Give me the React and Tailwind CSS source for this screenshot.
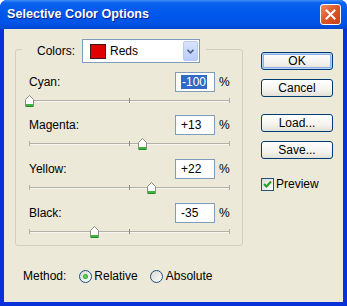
import React from "react";

function Thumb({ left }) {
  return (
    <svg
      width="9"
      height="12"
      viewBox="0 0 9 12"
      className={`absolute top-[3px] ${left}`}
    >
      <path d="M0.5 4.5 L4.5 0.5 L8.5 4.5 L8.5 11.5 L0.5 11.5 Z" fill="#FFFFFF" stroke="#8A8A80" />
      <rect x="1" y="9" width="7" height="2" fill="#3FB33F" />
      <line x1="1" y1="11.5" x2="8" y2="11.5" stroke="#1F8F1F" />
    </svg>
  );
}

function SliderRow({ label, value, selected, thumbLeft, sliderH }) {
  return (
    <div className="flex flex-col">
      <div className="flex h-[20px] items-center">
        <span className="flex-1 text-[12px] text-black">{label}</span>
        <div className="flex h-[20px] w-[40px] items-center border border-[#7F9DB9] bg-white pl-[5px] text-[12px] text-black">
          {selected ? (
            <span className="bg-[#316AC5] px-[1px] leading-[14px] text-white">{value}</span>
          ) : (
            <span>{value}</span>
          )}
        </div>
        <span className="w-[15px] pl-[4px] text-[12px] text-black">%</span>
      </div>
      <div className={`relative ${sliderH}`}>
        <div className="absolute left-0 right-0 top-[8px] h-[2px] border-t border-[#B1B0A6] bg-[#F7F6F1]" />
        <div className="absolute left-0 top-[6px] h-[5px] w-[1px] bg-[#B1B0A6]" />
        <div className="absolute left-[100px] top-[6px] h-[5px] w-[1px] bg-[#8E8D84]" />
        <div className="absolute right-0 top-[6px] h-[5px] w-[1px] bg-[#B1B0A6]" />
        <Thumb left={thumbLeft} />
      </div>
    </div>
  );
}

function XpButton({ children, isDefault, className }) {
  return (
    <div
      className={`flex h-[18px] w-[72px] items-center justify-center rounded-[3px] border border-[#003C74] bg-[linear-gradient(to_bottom,#FFFFFF,#F4F3EE_60%,#E3E1D6)] text-[12px] leading-none text-black ${
        isDefault ? "shadow-[inset_0_0_0_1px_#B8D2F5,inset_0_0_0_2px_#8FB0EC]" : ""
      } ${className || ""}`}
    >
      {children}
    </div>
  );
}

function Radio({ checked }) {
  return (
    <div className="flex h-[13px] w-[13px] items-center justify-center rounded-full border border-[#1C5180] bg-[linear-gradient(135deg,#D8D7CF,#FFFFFF)]">
      {checked && (
        <div className="h-[5px] w-[5px] rounded-full bg-[radial-gradient(circle,#5EDB5E,#1E9E1E)]" />
      )}
    </div>
  );
}

export default function App() {
  return (
    <div className="flex h-[306px] w-[347px] flex-col overflow-hidden rounded-t-[7px] bg-[#0831D9] font-['Liberation_Sans',Arial,sans-serif]">
      {/* Title bar */}
      <div className="flex h-[29px] items-center justify-between bg-[linear-gradient(to_bottom,#3D8DF9_0%,#0A62EE_10%,#0058EC_45%,#0054E6_80%,#0046D2_100%)] pl-[7px] pr-[6px]">
        <span className="text-[12.6px] font-bold text-white [text-shadow:1px_1px_0_#0A1E8C]">
          Selective Color Options
        </span>
        <div className="flex h-[21px] w-[21px] items-center justify-center rounded-[3px] border border-white bg-[linear-gradient(135deg,#EE8A62,#DB5526_50%,#C4401A)]">
          <svg width="11" height="11" viewBox="0 0 11 11">
            <path d="M1.5 1.5 L9.5 9.5 M9.5 1.5 L1.5 9.5" stroke="#FFFFFF" strokeWidth="2" strokeLinecap="square" />
          </svg>
        </div>
      </div>

      {/* Body */}
      <div className="mx-[4px] mb-[4px] flex flex-1 bg-[#ECE9D8]">
        {/* Left column */}
        <div className="flex flex-col pl-[11px] pt-[20px]">
          <div className="relative h-[197px] w-[228px] rounded-[3px] border border-[#D0D0BF] pl-[13px] pr-[12px] pt-[22px]">
            {/* Legend */}
            <div className="absolute left-[6px] top-[-11px] flex h-[24px] items-center bg-[#ECE9D8] pl-[15px] pr-[6px]">
              <span className="w-[45px] text-[12px] text-black">Colors:</span>
              <div className="flex h-[24px] w-[118px] items-center border border-[#7F9DB9] bg-white pl-[7px] pr-[1px]">
                <div className="h-[15px] w-[16px] border border-[#3A1A1A] bg-[#E00000]" />
                <span className="ml-[4px] flex-1 text-[12px] text-black">Reds</span>
                <div className="flex h-[20px] w-[15px] items-center justify-center rounded-[2px] border border-[#B7CAF4] bg-[linear-gradient(to_bottom,#D9E4FD,#B9CDF9)]">
                  <svg width="7" height="5" viewBox="0 0 7 5">
                    <path d="M0.5 0.8 L3.5 3.8 L6.5 0.8" stroke="#4D6185" strokeWidth="1.6" fill="none" />
                  </svg>
                </div>
              </div>
            </div>

            <SliderRow label="Cyan:" value="-100" selected thumbLeft="left-[-4px]" sliderH="h-[23px]" />
            <SliderRow label="Magenta:" value="+13" thumbLeft="left-[109px]" sliderH="h-[24px]" />
            <SliderRow label="Yellow:" value="+22" thumbLeft="left-[118px]" sliderH="h-[24px]" />
            <SliderRow label="Black:" value="-35" thumbLeft="left-[61px]" sliderH="h-[24px]" />
          </div>

          {/* Method row */}
          <div className="mt-[22px] flex h-[16px] items-center pl-[8px] text-[12px] text-black">
            <span>Method:</span>
            <div className="ml-[13px]">
              <Radio checked />
            </div>
            <span className="ml-[2px]">Relative</span>
            <div className="ml-[12px]">
              <Radio />
            </div>
            <span className="ml-[3px]">Absolute</span>
          </div>
        </div>

        {/* Right column */}
        <div className="ml-[18px] flex flex-col pt-[23px]">
          <XpButton isDefault>OK</XpButton>
          <XpButton className="mt-[9px]">Cancel</XpButton>
          <XpButton className="mt-[17px]">Load...</XpButton>
          <XpButton className="mt-[9px]">Save...</XpButton>
          <div className="mt-[16px] flex items-center">
            <div className="flex h-[13px] w-[13px] items-center justify-center border border-[#1C5180] bg-[linear-gradient(135deg,#DCDBD3,#FFFFFF)]">
              <svg width="9" height="9" viewBox="0 0 9 9">
                <path d="M1 4 L3.5 6.5 L8 1.5" stroke="#21A121" strokeWidth="2" fill="none" />
              </svg>
            </div>
            <span className="ml-[2px] text-[12px] text-black">Preview</span>
          </div>
        </div>
      </div>
    </div>
  );
}
